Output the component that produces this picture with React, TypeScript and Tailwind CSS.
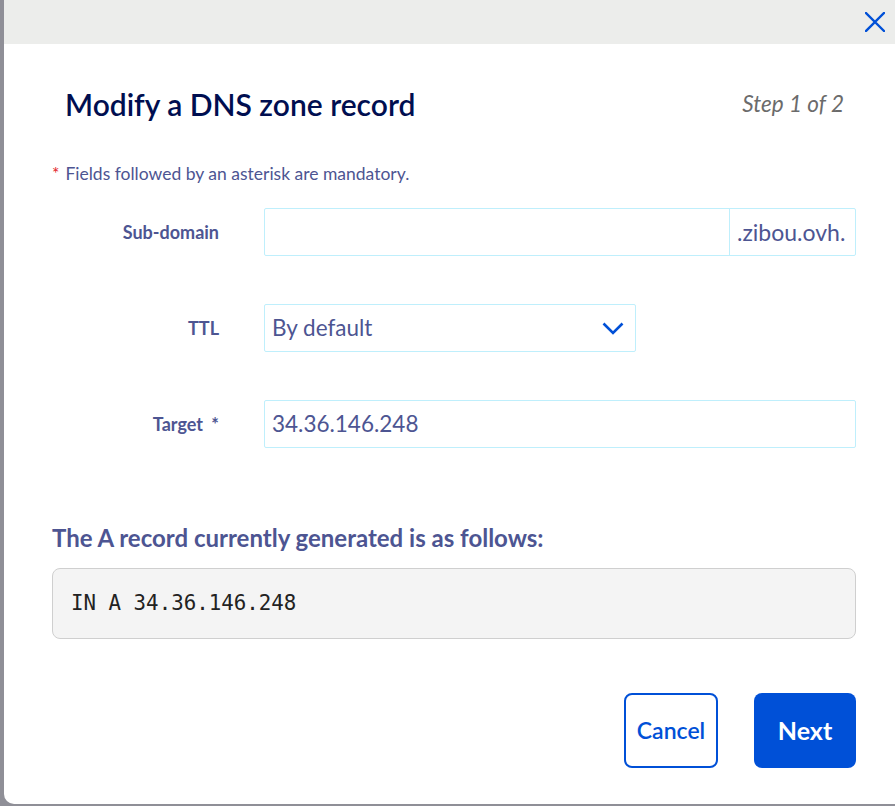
const font = { fontFamily: "Lato, 'Open Sans', sans-serif" };

function Label({ children }: { children: React.ReactNode }) {
  return (
    <div className="w-[167px] text-right text-[18px] font-bold text-[#4d5592]">{children}</div>
  );
}

export default function App() {
  return (
    <div className="w-[895px] h-[806px] overflow-hidden bg-[#8f8f97] pl-[4px] pb-[2px]" style={font}>
      <div className="flex h-[804px] flex-col rounded-bl-[10px] bg-white">
        {/* header bar */}
        <div className="flex h-[44px] items-center justify-end bg-[#ecedeb] pr-[10px]">
          <svg width="20" height="20" viewBox="0 0 20 20" className="mb-[1px]">
            <path d="M1 1 L19 19 M19 1 L1 19" stroke="#0050d7" strokeWidth="2.4" strokeLinecap="square" fill="none" />
          </svg>
        </div>

        <div className="flex flex-col pl-[48px] pr-[39px]">
          <div className="flex items-center justify-between pt-[42px] pl-[13px]">
            <h1 className="text-[30px] leading-[36px] font-semibold text-[#000e50]">Modify a DNS zone record</h1>
            <span className="pr-[12px] text-[22.5px] leading-[36px] italic text-[#6b6b6b]">Step 1 of 2</span>
          </div>

          <p className="mt-[40px] flex text-[17.5px] leading-[24px] text-[#4d5592]">
            <span className="text-[#e31e2a]">*</span>
            <span className="ml-[6px]">Fields followed by an asterisk are mandatory.</span>
          </p>

          <div className="mt-[22px] flex flex-col gap-[48px]">
            <div className="flex items-center gap-[45px]">
              <Label>Sub-domain</Label>
              <div className="flex h-[48px] flex-1 rounded-[2px] border border-[#bfeffc]">
                <div className="flex-1" />
                <div className="flex w-[126px] items-center border-l border-[#bfeffc] pl-[7px] text-[23px] text-[#4d5592]">.zibou.ovh.</div>
              </div>
            </div>

            <div className="flex items-center gap-[45px]">
              <Label>TTL</Label>
              <div className="flex h-[48px] w-[372px] items-center justify-between rounded-[2px] border border-[#bfeffc] pl-[7px] pr-[11px]">
                <span className="text-[22.5px] text-[#4d5592]">By default</span>
                <svg width="22" height="13" viewBox="0 0 22 13">
                  <polyline points="1.5,1.5 11,11 20.5,1.5" stroke="#0050d7" strokeWidth="2.6" fill="none" />
                </svg>
              </div>
            </div>

            <div className="flex items-center gap-[45px]">
              <Label>
                Target <span className="pl-[4px]">*</span>
              </Label>
              <div className="flex h-[48px] flex-1 items-center rounded-[2px] border border-[#bfeffc] pl-[7px]">
                <span className="text-[22.5px] text-[#4d5592]">34.36.146.248</span>
              </div>
            </div>
          </div>

          <h2 className="mt-[75px] text-[24px] leading-[30px] font-bold text-[#4d5592]">The A record currently generated is as follows:</h2>

          <div className="mt-[15px] flex h-[71px] items-center rounded-[8px] border border-[#cfcfcf] bg-[#f4f4f4] pl-[18px]">
            <span className="text-[20.8px] text-[#222]" style={{ fontFamily: "'DejaVu Sans Mono', monospace" }}>
              IN A 34.36.146.248
            </span>
          </div>

          <div className="mt-[54px] flex justify-end gap-[36px]">
            <button className="h-[75px] w-[94px] rounded-[8px] border-[2px] border-[#0050d7] text-[23px] font-semibold text-[#0050d7]">
              Cancel
            </button>
            <button className="h-[75px] w-[102px] rounded-[8px] bg-[#0050d7] text-[25px] font-bold text-white">
              Next
            </button>
          </div>
        </div>
      </div>
    </div>
  );
}
